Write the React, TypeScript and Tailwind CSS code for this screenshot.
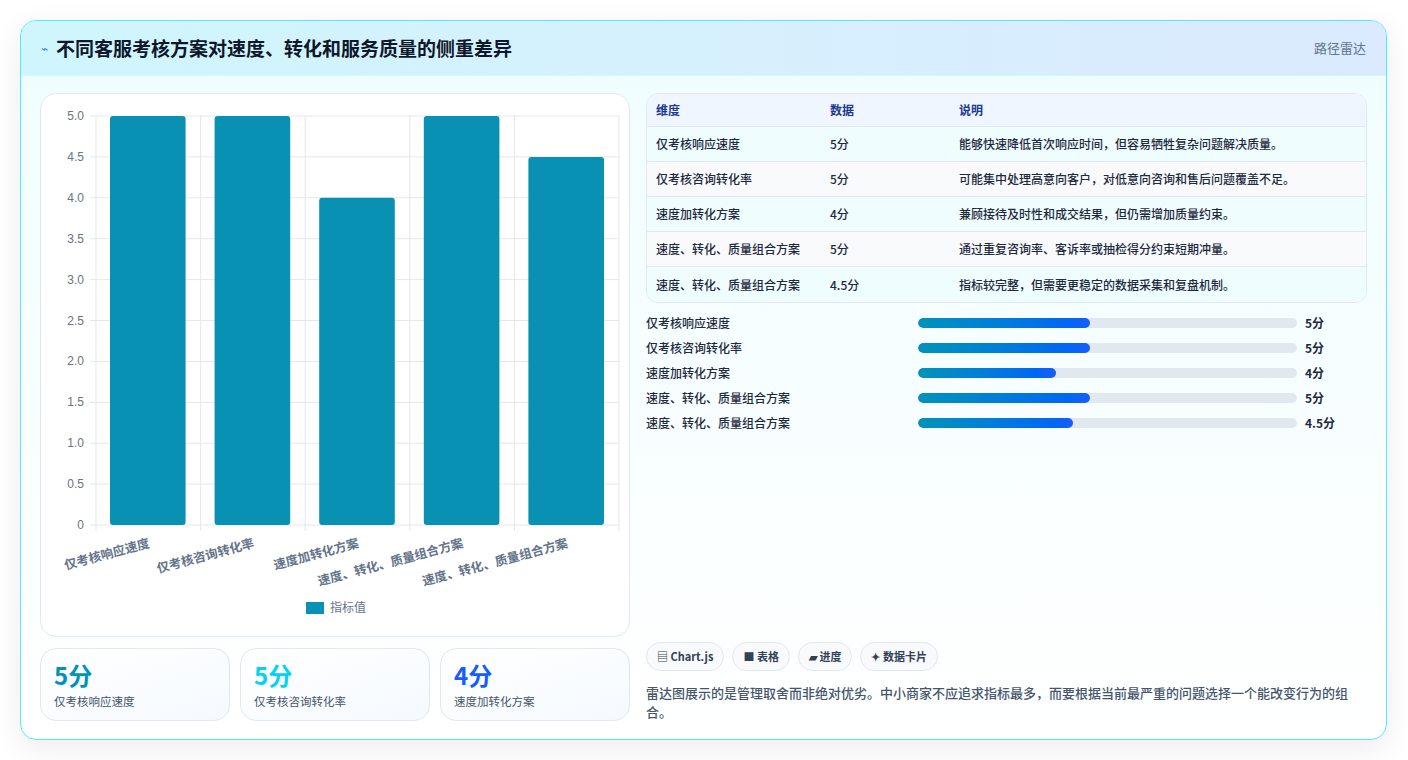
import React from "react";

const rows = [
  ["仅考核响应速度", "5分", "能够快速降低首次响应时间，但容易牺牲复杂问题解决质量。", 5],
  ["仅考核咨询转化率", "5分", "可能集中处理高意向客户，对低意向咨询和售后问题覆盖不足。", 5],
  ["速度加转化方案", "4分", "兼顾接待及时性和成交结果，但仍需增加质量约束。", 4],
  ["速度、转化、质量组合方案", "5分", "通过重复咨询率、客诉率或抽检得分约束短期冲量。", 5],
  ["速度、转化、质量组合方案", "4.5分", "指标较完整，但需要更稳定的数据采集和复盘机制。", 4.5],
] as const;

function Chart() {
  const x0 = 55, x1 = 578, yTop = 22, yBot = 431;
  const cw = (x1 - x0) / 5;
  const ticks = [0, 0.5, 1, 1.5, 2, 2.5, 3, 3.5, 4, 4.5, 5];
  const y = (v: number) => yBot - (v / 5) * (yBot - yTop);
  return (
    <svg width="590" height="543" className="block">
      {ticks.map((t) => (
        <g key={t}>
          <line x1={x0 - 6} x2={x1} y1={y(t)} y2={y(t)} stroke="#e5e7eb" />
          <text x={x0 - 12} y={y(t) + 4} textAnchor="end" fontSize="12" fill="#6b7280" fontFamily="Liberation Sans, sans-serif">
            {t === 0 ? "0" : t.toFixed(1)}
          </text>
        </g>
      ))}
      {[0, 1, 2, 3, 4, 5].map((i) => (
        <line key={i} x1={x0 + i * cw} x2={x0 + i * cw} y1={yTop} y2={yBot + 6} stroke="#e5e7eb" />
      ))}
      {rows.map((r, i) => (
        <rect key={i} x={x0 + i * cw + 14} y={y(r[3])} width={cw - 29} height={yBot - y(r[3])} rx="3" fill="#0891b2" />
      ))}
      {rows.map((r, i) => (
        <text
          key={i}
          transform={`translate(${x0 + i * cw + cw / 2 + 2},${yBot + 22}) rotate(-15)`}
          textAnchor="end"
          fontSize="12.5"
          fontWeight="600"
          fill="#64748b"
          fontFamily="Noto Sans CJK SC, sans-serif"
        >
          {r[0]}
        </text>
      ))}
      <rect x="265" y="508" width="18" height="12" fill="#0891b2" />
      <text x="289" y="518" fontSize="12" fill="#64748b" fontFamily="Noto Sans CJK SC, sans-serif">指标值</text>
    </svg>
  );
}

export default function App() {
  return (
    <div className="w-[1408px] h-[760px] bg-white p-5 pr-[21px]" style={{ fontFamily: '"Noto Sans CJK SC", "Noto Sans", sans-serif' }}>
      <div className="h-[720px] rounded-2xl border border-cyan-300 overflow-hidden flex flex-col shadow-[0_8px_30px_rgba(0,0,0,0.08)] bg-gradient-to-b from-[#effdff] to-white">
        <div className="h-[55px] shrink-0 flex items-center justify-between px-5 bg-gradient-to-r from-[#cff6fd] to-[#dbeafe] border-b border-cyan-100">
          <div className="flex items-center gap-2">
            <span className="text-blue-500 text-xs">⌁</span>
            <span className="text-[19px] font-bold text-slate-900">不同客服考核方案对速度、转化和服务质量的侧重差异</span>
          </div>
          <span className="text-[13px] text-slate-500">路径雷达</span>
        </div>
        <div className="flex-1 flex gap-4 px-[19px] pt-[17px] pb-[18px]">
          <div className="w-[590px] flex flex-col gap-[11px]">
            <div className="h-[544px] rounded-2xl border border-slate-200 bg-white overflow-hidden">
              <Chart />
            </div>
            <div className="flex gap-[10px]">
              {[["5分", "仅考核响应速度", "text-cyan-600"], ["5分", "仅考核咨询转化率", "text-cyan-400"], ["4分", "速度加转化方案", "text-blue-600"]].map(([v, l, c], i) => (
                <div key={i} className="flex-1 h-[73px] rounded-2xl border border-slate-200 bg-gradient-to-br from-white to-[#f5faff] px-[13px] pt-[10px]">
                  <div className={`text-[24px] font-bold leading-8 ${c}`}>{v}</div>
                  <div className="text-[11.5px] text-slate-600 mt-[2px]">{l}</div>
                </div>
              ))}
            </div>
          </div>
          <div className="flex-1 flex flex-col">
            <div className="rounded-xl border border-slate-200 overflow-hidden bg-white">
              <div className="flex h-[33px] items-center bg-[#eff6ff] border-b border-slate-200 text-[12px] font-bold text-blue-900">
                <div className="w-[183px] pl-[9px]">维度</div>
                <div className="w-[129px]">数据</div>
                <div>说明</div>
              </div>
              {rows.map((r, i) => (
                <div key={i} className={`flex h-[35px] items-center text-[12px] font-medium text-slate-800 ${i < 4 ? "border-b border-slate-200" : ""} ${i % 2 ? "bg-[#f8fafc]" : "bg-[#f0fdff]"}`}>
                  <div className="w-[183px] pl-[9px]">{r[0]}</div>
                  <div className="w-[129px]">{r[1]}</div>
                  <div>{r[2]}</div>
                </div>
              ))}
            </div>
            <div className="flex flex-col gap-[7px] mt-[11px]">
              {rows.map((r, i) => (
                <div key={i} className="flex items-center h-[18px] text-[12px] font-medium text-slate-800">
                  <div className="w-[272px]">{r[0]}</div>
                  <div className="w-[379px] h-[10px] rounded-full bg-slate-200 overflow-hidden">
                    <div className="h-full rounded-full bg-gradient-to-r from-cyan-600 to-blue-600" style={{ width: `${r[3] * 9.1}%` }} />
                  </div>
                  <div className="ml-2 font-bold">{r[1]}</div>
                </div>
              ))}
            </div>
            <div className="flex-1" />
            <div className="flex gap-2">
              {["▤ Chart.js", "■ 表格", "▰ 进度", "✦ 数据卡片"].map((t) => (
                <div key={t} className="h-[29px] px-[10px] rounded-full border border-slate-200 bg-[#f8fafc] flex items-center text-[11px] font-bold text-slate-700">{t}</div>
              ))}
            </div>
            <p className="mt-[12px] text-[13px] leading-[19px] text-slate-600 font-medium">雷达图展示的是管理取舍而非绝对优劣。中小商家不应追求指标最多，而要根据当前最严重的问题选择一个能改变行为的组合。</p>
          </div>
        </div>
      </div>
    </div>
  );
}
